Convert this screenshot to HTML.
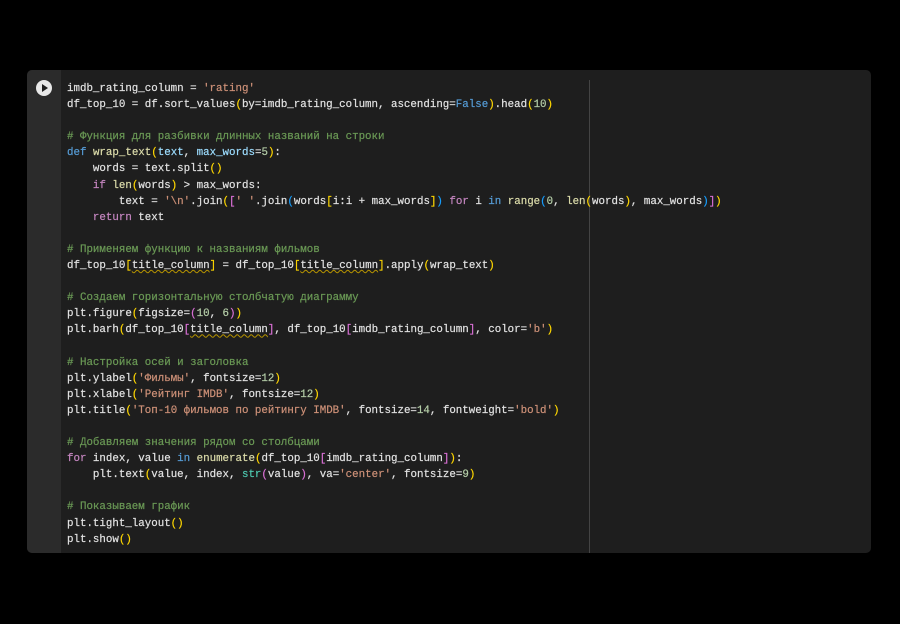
<!DOCTYPE html>
<html><head><meta charset="utf-8"><style>
html,body{margin:0;padding:0;background:#000;width:900px;height:624px;overflow:hidden}
.cell{position:absolute;left:27px;top:70px;width:844px;height:483px;background:#1e1e1e;border-radius:5px;overflow:hidden}
.gut{position:absolute;left:0;top:0;width:34px;height:100%;background:#2b2b2b}
.play{position:absolute;left:9px;top:10px;width:16px;height:16px;border-radius:50%;background:#e8e8e8}
.play:after{content:"";position:absolute;left:6px;top:4px;border-left:6px solid #1e1e1e;border-top:4px solid transparent;border-bottom:4px solid transparent}
.vl{position:absolute;left:562px;top:10px;width:1px;height:473px;background:#444}
pre{position:absolute;left:40px;top:11px;margin:0;font-family:"Liberation Mono",monospace;font-size:10.8px;line-height:16.1px;color:#e2e2e2;-webkit-text-stroke:0.2px currentColor}
.s{color:#ce9178}.c{color:#6a9955}.k{color:#569cd6}.kc{color:#c586c0}.n{color:#b5cea8}.f{color:#dcdcaa}.p{color:#9cdcfe}.t{color:#4ec9b0}
.b1{color:#ffd700}.b2{color:#da70d6}.b3{color:#179fff}
.w{text-decoration:underline wavy #b89500;text-decoration-thickness:1px}
</style></head><body>
<div class="cell"><div class="gut"><div class="play"></div></div><div class="vl"></div>
<pre>imdb_rating_column = <span class="s">'rating'</span>
df_top_10 = df.sort_values<span class="b1">(</span>by=imdb_rating_column, ascending=<span class="k">False</span><span class="b1">)</span>.head<span class="b1">(</span><span class="n">10</span><span class="b1">)</span>

<span class="c"># Функция для разбивки длинных названий на строки</span>
<span class="k">def</span> <span class="f">wrap_text</span><span class="b1">(</span><span class="p">text</span>, <span class="p">max_words</span>=<span class="n">5</span><span class="b1">)</span>:
    words = text.split<span class="b1">()</span>
    <span class="kc">if</span> <span class="f">len</span><span class="b1">(</span>words<span class="b1">)</span> &gt; max_words:
        text = <span class="s">'\n'</span>.join<span class="b1">(</span><span class="b2">[</span><span class="s">' '</span>.join<span class="b3">(</span>words<span class="b1">[</span>i:i + max_words<span class="b1">]</span><span class="b3">)</span> <span class="kc">for</span> i <span class="k">in</span> <span class="f">range</span><span class="b3">(</span><span class="n">0</span>, <span class="f">len</span><span class="b1">(</span>words<span class="b1">)</span>, max_words<span class="b3">)</span><span class="b2">]</span><span class="b1">)</span>
    <span class="kc">return</span> text

<span class="c"># Применяем функцию к названиям фильмов</span>
df_top_10<span class="b1">[</span><span class="w">title_column</span><span class="b1">]</span> = df_top_10<span class="b1">[</span><span class="w">title_column</span><span class="b1">]</span>.apply<span class="b1">(</span>wrap_text<span class="b1">)</span>

<span class="c"># Создаем горизонтальную столбчатую диаграмму</span>
plt.figure<span class="b1">(</span>figsize=<span class="b2">(</span><span class="n">10</span>, <span class="n">6</span><span class="b2">)</span><span class="b1">)</span>
plt.barh<span class="b1">(</span>df_top_10<span class="b2">[</span><span class="w">title_column</span><span class="b2">]</span>, df_top_10<span class="b2">[</span>imdb_rating_column<span class="b2">]</span>, color=<span class="s">'b'</span><span class="b1">)</span>

<span class="c"># Настройка осей и заголовка</span>
plt.ylabel<span class="b1">(</span><span class="s">'Фильмы'</span>, fontsize=<span class="n">12</span><span class="b1">)</span>
plt.xlabel<span class="b1">(</span><span class="s">'Рейтинг IMDB'</span>, fontsize=<span class="n">12</span><span class="b1">)</span>
plt.title<span class="b1">(</span><span class="s">'Топ-10 фильмов по рейтингу IMDB'</span>, fontsize=<span class="n">14</span>, fontweight=<span class="s">'bold'</span><span class="b1">)</span>

<span class="c"># Добавляем значения рядом со столбцами</span>
<span class="kc">for</span> index, value <span class="k">in</span> <span class="f">enumerate</span><span class="b1">(</span>df_top_10<span class="b2">[</span>imdb_rating_column<span class="b2">]</span><span class="b1">)</span>:
    plt.text<span class="b1">(</span>value, index, <span class="t">str</span><span class="b2">(</span>value<span class="b2">)</span>, va=<span class="s">'center'</span>, fontsize=<span class="n">9</span><span class="b1">)</span>

<span class="c"># Показываем график</span>
plt.tight_layout<span class="b1">()</span>
plt.show<span class="b1">()</span></pre>
</div>
</body></html>
